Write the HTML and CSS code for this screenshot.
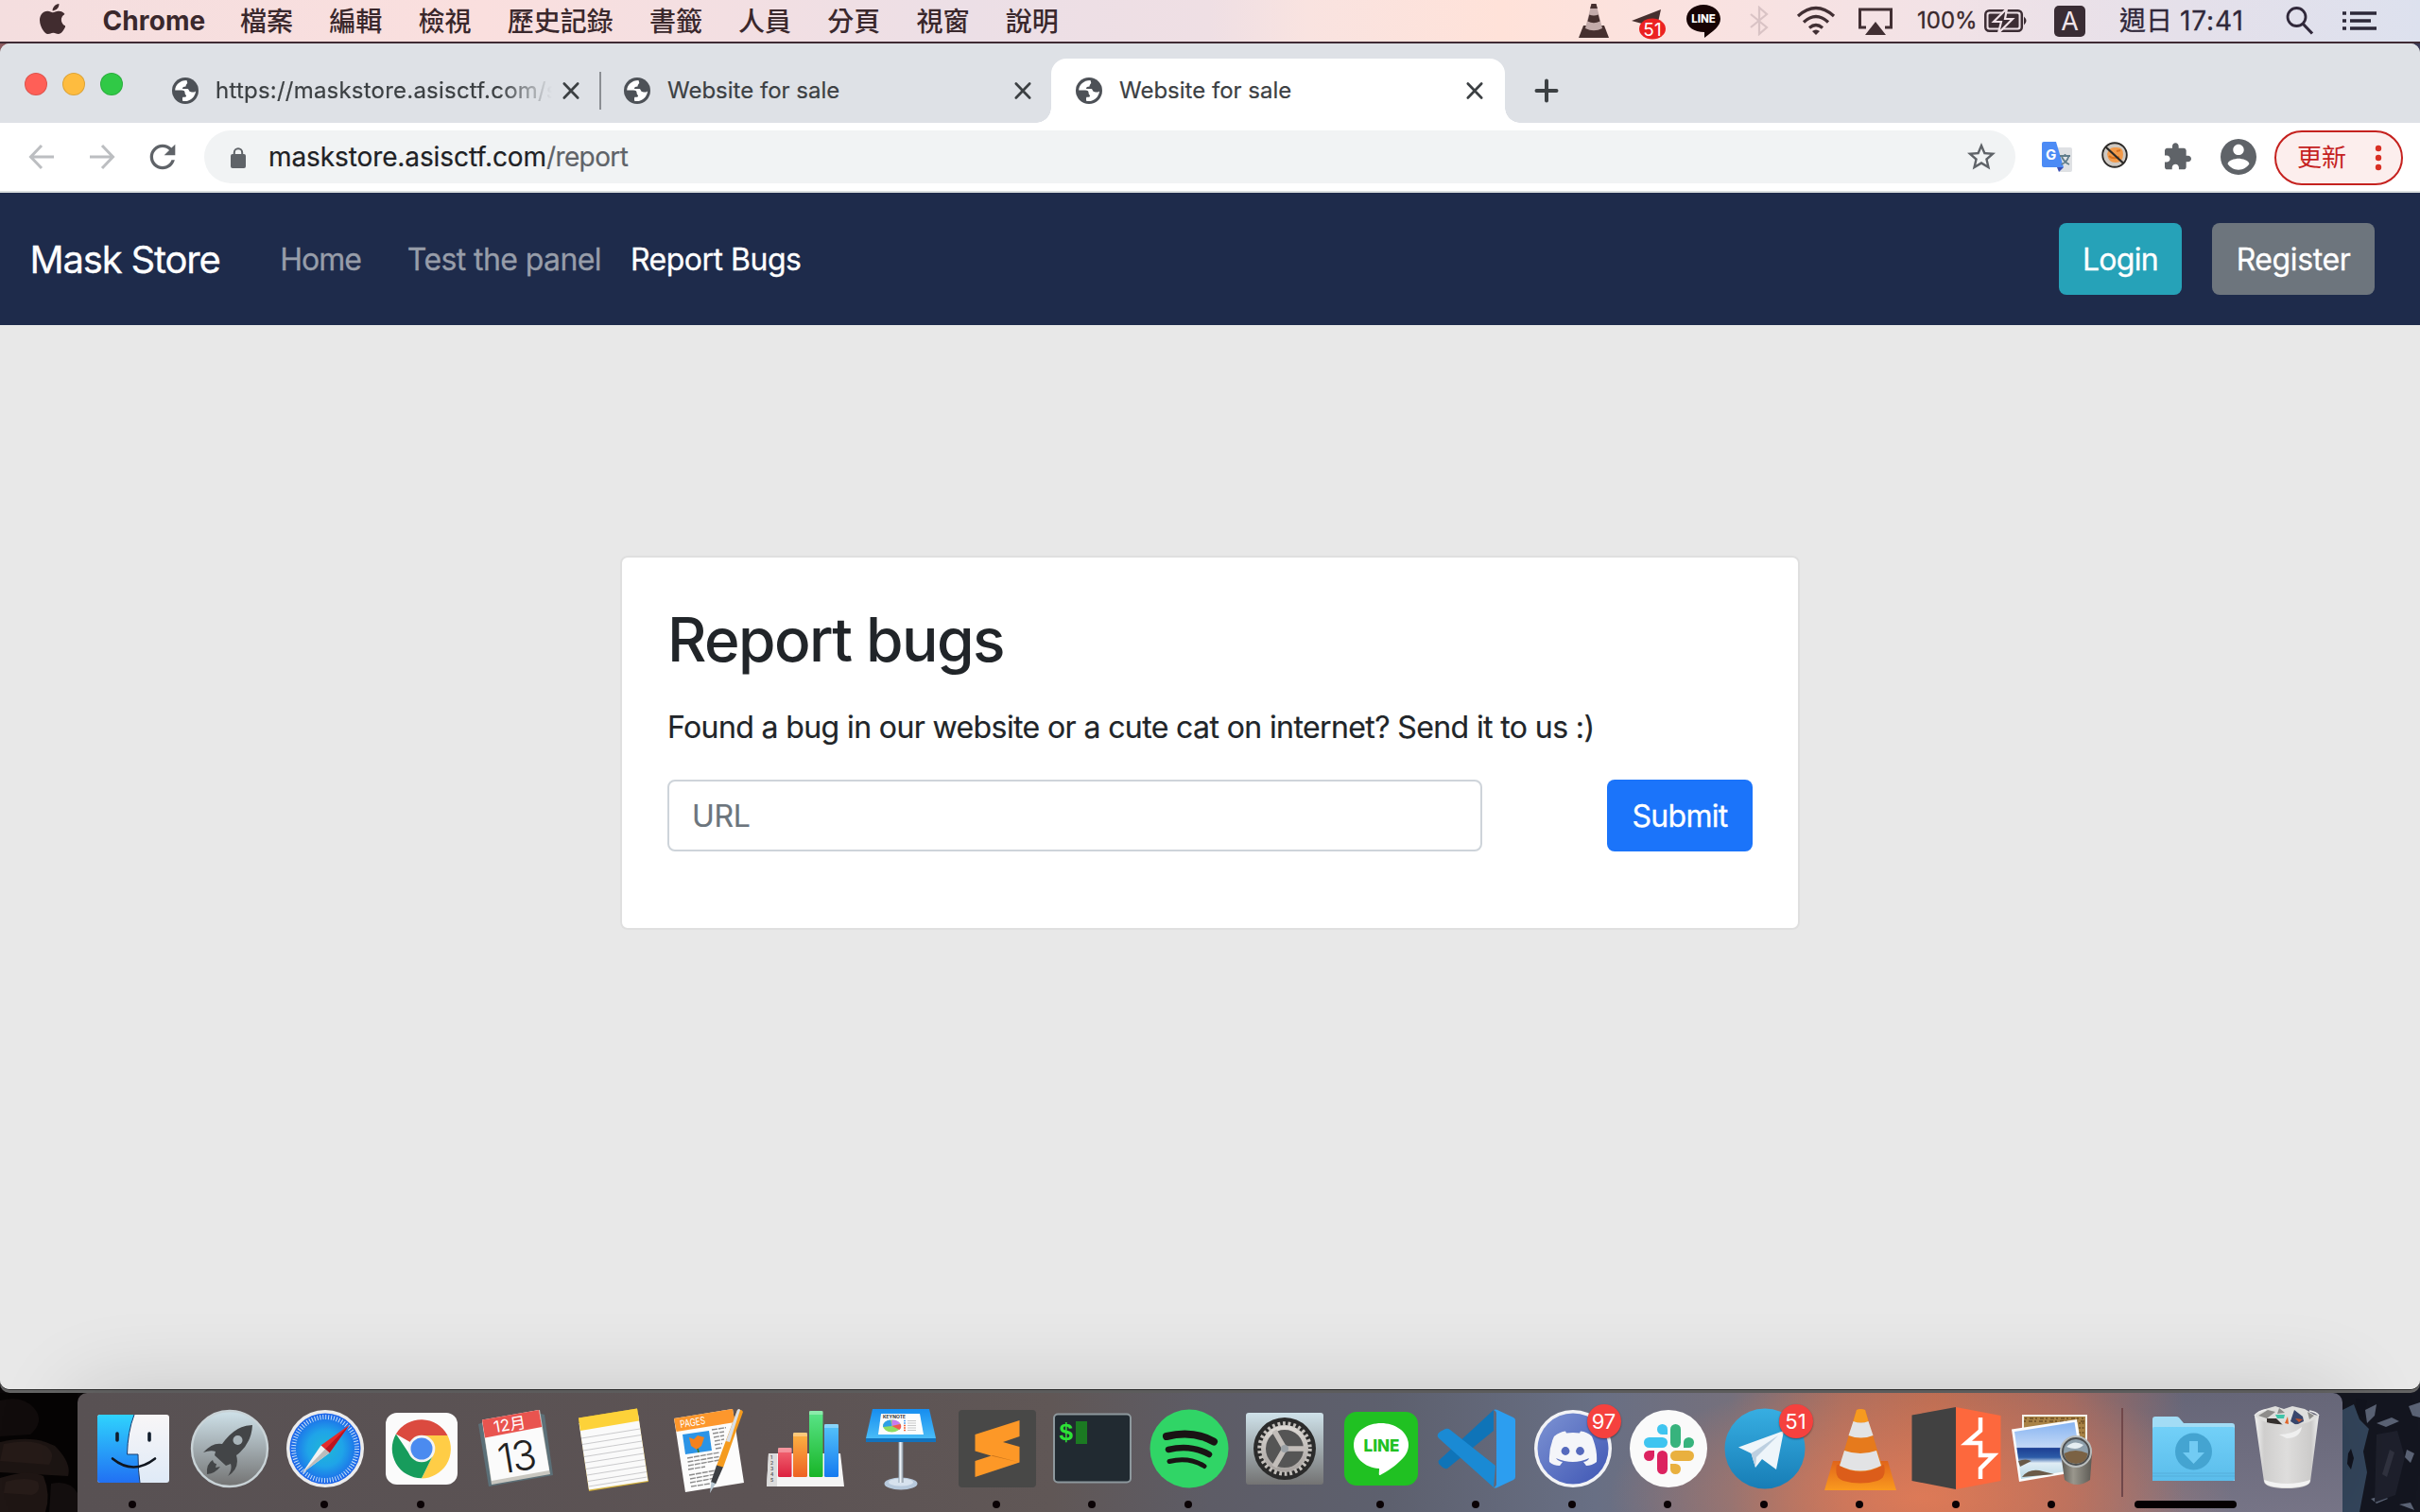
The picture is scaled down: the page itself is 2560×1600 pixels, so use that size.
FILE: index.html
```
<!DOCTYPE html>
<html lang="zh-Hant">
<head>
<meta charset="utf-8">
<title>Website for sale</title>
<link rel="stylesheet" href="styles.css">
</head>
<body>
<svg class="defs" width="0" height="0" aria-hidden="true">
  <symbol id="globe" viewBox="0 0 28 28"><circle cx="14" cy="14" r="14" fill="#4d5157"/><path d="M15.500 3C8 3 3.400 8 3.200 13.600H10c3 0 3.600 1 3.600 3 0 1.400 1.200 1.800 1.400 2.800 0 1.600-2 1.300-3.600 1.300-.6 1.500-.5 3-.2 4.100C18 26.400 24.600 21 25 14.400c-1.500 1.300-3.500 1.500-5 .9-2.600-.3-1.600-2.600-3.600-3.300H11c0-2.200 1.500-2.300 3.500-2.500C14.800 7.500 15.200 7 16.300 6z" fill="#fff"/></symbol>
  <symbol id="close" viewBox="0 0 20 20"><path d="M2.800 2.500l14.400 15M17.200 2.500l-14.400 15" stroke="#3c4043" stroke-width="2.700" stroke-linecap="round"/></symbol>
  <linearGradient id="finderL" x1="0" y1="0" x2="0" y2="1"><stop offset="0" stop-color="#2fd3fd"/><stop offset="1" stop-color="#2170f3"/></linearGradient>
  <linearGradient id="finderR" x1="0" y1="0" x2="0" y2="1"><stop offset="0" stop-color="#f8f6f7"/><stop offset="1" stop-color="#dfeaf7"/></linearGradient>
  <linearGradient id="steel" x1="0" y1="0" x2="0" y2="1"><stop offset="0" stop-color="#cfe2ea"/><stop offset="1" stop-color="#737373"/></linearGradient>
  <radialGradient id="safari"><stop offset="0" stop-color="#20b7d6"/><stop offset=".5" stop-color="#1fa4e8"/><stop offset="1" stop-color="#1c63ea"/></radialGradient>
  <linearGradient id="blueBar" x1="0" y1="0" x2="0" y2="1"><stop offset="0" stop-color="#57c5fa"/><stop offset="1" stop-color="#157af0"/></linearGradient>
  <linearGradient id="orangeBar" x1="0" y1="0" x2="0" y2="1"><stop offset="0" stop-color="#fdb544"/><stop offset="1" stop-color="#ee6223"/></linearGradient>
  <linearGradient id="greenBar" x1="0" y1="0" x2="0" y2="1"><stop offset="0" stop-color="#5be58a"/><stop offset="1" stop-color="#18b527"/></linearGradient>
  <linearGradient id="redBar" x1="0" y1="0" x2="0" y2="1"><stop offset="0" stop-color="#f36a75"/><stop offset="1" stop-color="#dc213f"/></linearGradient>
  <linearGradient id="keynote" x1="0" y1="0" x2="0" y2="1"><stop offset="0" stop-color="#168df0"/><stop offset="1" stop-color="#4fc2f8"/></linearGradient>
  <linearGradient id="metal" x1="0" y1="0" x2="1" y2="0"><stop offset="0" stop-color="#8fa2b3"/><stop offset=".4" stop-color="#eef4fa"/><stop offset="1" stop-color="#7f8c99"/></linearGradient>
  <linearGradient id="gear" x1="0" y1="0" x2="0" y2="1"><stop offset="0" stop-color="#dcd8d4"/><stop offset="1" stop-color="#a8a3a0"/></linearGradient>
  <linearGradient id="tele" x1="0" y1="0" x2="0" y2="1"><stop offset="0" stop-color="#37aee2"/><stop offset="1" stop-color="#177db6"/></linearGradient>
  <linearGradient id="disc" x1="0" y1="0" x2="1" y2="1"><stop offset="0" stop-color="#7d93d3"/><stop offset="1" stop-color="#3f56b4"/></linearGradient>
  <linearGradient id="cone" x1="0" y1="0" x2="0" y2="1"><stop offset="0" stop-color="#e0641a"/><stop offset="1" stop-color="#fa9a1e"/></linearGradient>
  <linearGradient id="folder" x1="0" y1="0" x2="0" y2="1"><stop offset="0" stop-color="#72d0f8"/><stop offset="1" stop-color="#5bbdeb"/></linearGradient>
  <linearGradient id="sea" x1="0" y1="0" x2="0" y2="1"><stop offset="0" stop-color="#86b4f2"/><stop offset=".44" stop-color="#c3d8f6"/><stop offset=".46" stop-color="#1d3f93"/><stop offset=".62" stop-color="#2d5ca8"/><stop offset=".72" stop-color="#e0edf5"/><stop offset="1" stop-color="#b9d8e4"/></linearGradient>
  <linearGradient id="barrel" x1="0" y1="0" x2="1" y2="0"><stop offset="0" stop-color="#55544f"/><stop offset=".4" stop-color="#9a978d"/><stop offset="1" stop-color="#5c5a54"/></linearGradient>
  <linearGradient id="bin" x1="0" y1="0" x2="1" y2="0"><stop offset="0" stop-color="#f2f2f2"/><stop offset=".15" stop-color="#cfcecd"/><stop offset=".5" stop-color="#dedddc"/><stop offset=".88" stop-color="#cccbca"/><stop offset="1" stop-color="#efefef"/></linearGradient>
</svg>

<header class="menubar">
  <svg class="apple" width="28" height="32" viewBox="1.500 0 20 24" preserveAspectRatio="none"><path fill="#412c2f" d="M12.152 6.896c-.948 0-2.415-1.078-3.960-1.040-2.040.027-3.910 1.183-4.961 3.014-2.117 3.675-.546 9.103 1.519 12.090 1.013 1.454 2.208 3.090 3.792 3.039 1.520-.065 2.090-.987 3.935-.987 1.831 0 2.350.987 3.960.948 1.637-.026 2.676-1.480 3.676-2.948 1.156-1.688 1.636-3.325 1.662-3.415-.039-.013-3.182-1.221-3.220-4.857-.026-3.040 2.480-4.494 2.597-4.559-1.429-2.090-3.623-2.324-4.390-2.376-2-.156-3.675 1.090-4.610 1.090zM15.530 3.830c.843-1.012 1.400-2.427 1.245-3.830-1.207.052-2.662.805-3.532 1.818-.780.896-1.454 2.338-1.273 3.714 1.338.104 2.715-.688 3.559-1.701"/></svg>
  <nav class="menus"><b>Chrome</b><span>檔案</span><span>編輯</span><span>檢視</span><span>歷史記錄</span><span>書籤</span><span>人員</span><span>分頁</span><span>視窗</span><span>說明</span></nav>
  <div class="status">
    <svg width="32" height="36" viewBox="0 0 32 36"><path d="M5 23h22l5 13H0z" fill="#46302f"/><path d="M13.500 0h5l6.500 26q-9 4.500-18 0z" fill="#c3abaa"/><path d="M13.500 0h5l1.400 5h-7.800zM11.300 11.500q4.700 2 9.400 0l1.800 7q-6.500 3.500-13 0z" fill="#46302f"/></svg>
    <svg width="40" height="44" viewBox="0 0 40 44"><path d="M2 22L33 10l-4 18-10-4-6 1z" fill="#46302f"/><ellipse cx="24" cy="30.500" rx="14" ry="11" fill="#ec2222"/><text x="24" y="37.500" class="mini-badge" text-anchor="middle">51</text></svg>
    <svg width="40" height="40" viewBox="0 0 40 40"><path d="M20 3c10 0 18 6.500 18 15 0 8-8 13-17 20v-6C10 32 2 26.500 2 18S10 3 20 3z" fill="#170304"/><text x="20" y="22" class="line-mini" text-anchor="middle">LINE</text></svg>
    <svg width="22" height="32" viewBox="0 0 22 32"><path d="M2 9l17 14-8 7V2l8 7L2 23" fill="none" stroke="#d9c3c5" stroke-width="2.200"/></svg>
    <svg width="42" height="32" viewBox="0 0 42 32"><g fill="none" stroke="#412f33" stroke-width="3.200"><path d="M2 11q19-17 38 0M8 17.500q13-12 26 0M14 23.500q7-6 14 0"/></g><path d="M17 27q4-3 8 0l-4 4z" fill="#412f33"/></svg>
    <svg width="40" height="32" viewBox="0 0 40 32"><path d="M10 23H3.500V4h33v19H30" fill="none" stroke="#412f33" stroke-width="3"/><path d="M20 17l11 14H9z" fill="#412f33"/></svg>
    <span class="pct">100%</span>
    <svg width="48" height="28" viewBox="0 0 48 28"><rect x="2.300" y="3.300" width="38.500" height="21.500" rx="4" fill="none" stroke="#3c2d34" stroke-width="2.500"/><rect x="5.500" y="6.500" width="32" height="15" rx="1.500" fill="#3c2d34"/><path d="M43 9.500q5 4.500 0 9z" fill="#3c2d34"/><path d="M25 1L11 15h8l-3 12 15-15h-8z" fill="#3c2d34" stroke="#f0e1e7" stroke-width="2.200"/></svg>
    <span class="ime">A</span>
    <span class="date">週日 <i>17:41</i></span>
    <svg width="32" height="32" viewBox="0 0 32 32"><circle cx="11.500" cy="12" r="9.500" fill="none" stroke="#30283a" stroke-width="2.800"/><path d="M18 19l10 10.500" stroke="#30283a" stroke-width="3.200"/></svg>
    <svg width="38" height="24" viewBox="0 0 38 24"><path d="M1 4h4M1 12h4M1 20h4M9 4h28M9 12h22M9 20h28" stroke="#2c2838" stroke-width="3.600"/></svg>
  </div>
</header>

<main class="window">
  <div class="tabstrip">
    <div class="lights"><i class="red"></i><i class="yellow"></i><i class="green"></i></div>
    <div class="tab"><svg width="28" height="28"><use href="#globe"/></svg><span class="tab-title fade">https://maskstore.asisctf.com/s</span><svg width="20" height="20"><use href="#close"/></svg><i class="sep"></i></div>
    <div class="tab"><svg width="28" height="28"><use href="#globe"/></svg><span class="tab-title">Website for sale</span><svg width="20" height="20"><use href="#close"/></svg></div>
    <div class="tab active"><svg width="28" height="28"><use href="#globe"/></svg><span class="tab-title">Website for sale</span><svg width="20" height="20"><use href="#close"/></svg></div>
    <svg class="plus" width="26" height="26" viewBox="0 0 26 26"><path d="M13 2.500v21M2.500 13h21" stroke="#3c4043" stroke-width="4" stroke-linecap="round"/></svg>
  </div>

  <div class="toolbar">
    <div class="nav-icons">
      <svg width="32" height="32" viewBox="0 0 32 32"><path d="M29 16H5M16 4L4.500 16 16 28" fill="none" stroke="#bcbec1" stroke-width="3"/></svg>
      <svg width="32" height="32" viewBox="0 0 32 32"><path d="M3 16h24M16 4l11.500 12L16 28" fill="none" stroke="#bcbec1" stroke-width="3"/></svg>
      <svg width="40" height="40" viewBox="0 0 24 24"><path fill="#5f6368" d="M17.650 6.350C16.200 4.900 14.210 4 12 4c-4.420 0-7.990 3.580-7.990 8s3.570 8 7.990 8c3.730 0 6.840-2.550 7.730-6h-2.080c-.82 2.330-3.040 4-5.650 4-3.310 0-6-2.690-6-6s2.690-6 6-6c1.660 0 3.140.69 4.220 1.780L13 11h7V4l-2.350 2.350z"/></svg>
    </div>
    <div class="omnibox">
      <svg class="lock" width="16" height="22" viewBox="0 0 16 22"><rect y="7" width="16" height="15" rx="2" fill="#5f6368"/><path d="M3.800 8V5.500a4.200 4.200 0 0 1 8.400 0V8" fill="none" stroke="#5f6368" stroke-width="2"/></svg>
      <span class="url">maskstore.asisctf.com<em>/report</em></span>
      <svg class="star" width="36" height="36" viewBox="0 0 24 24"><path fill="#5f6368" d="M22 9.240l-7.190-.62L12 2 9.190 8.630 2 9.240l5.460 4.730L5.820 21 12 17.270 18.180 21l-1.630-7.030L22 9.240zM12 15.400l-3.760 2.270 1-4.280-3.320-2.880 4.380-.38L12 6.100l1.710 4.040 4.380.38-3.320 2.880 1 4.280L12 15.400z"/></svg>
    </div>
    <svg class="ext-translate" width="32" height="32" viewBox="0 0 32 32"><path d="M12 6h18q2 0 2 2v22q0 2-2 2H19z" fill="#dfe1e4"/><path d="M16 27h7l-5 5z" fill="#3a4fb5"/><path d="M2 0h13l8 27H2q-2 0-2-2V2q0-2 2-2z" fill="#4c8bf5"/><text x="4" y="19" class="g-letter">G</text><path d="M19 15h11M24.500 13v2M28.500 15q-2 7-8 9M21 16q3 6 8 8" fill="none" stroke="#607d8b" stroke-width="1.800"/></svg>
    <svg class="ext-cookie" width="28" height="28" viewBox="0 0 28 28"><circle cx="14" cy="14" r="12.800" fill="#cfc9c2" stroke="#2c2a28" stroke-width="1.900"/><path d="M6 13q2-8 9-7 8-1 8 7 0 9-8 9-8 0-9-9z" fill="#f29a4a"/><path d="M8 15q4 4 11 1M16 10l4-1" stroke="#d9731f" stroke-width="2" fill="none"/><path d="M4.500 5.500l19 17.500" stroke="#2c2a28" stroke-width="2.300"/></svg>
    <svg class="ext-puzzle" width="32" height="32" viewBox="0.500 0 24 24"><path fill="#5f6368" d="M20.500 11H19V7c0-1.100-.9-2-2-2h-4V3.500C13 2.120 11.880 1 10.500 1S8 2.120 8 3.500V5H4c-1.100 0-1.990.9-1.990 2v3.800H3.500c1.490 0 2.700 1.210 2.700 2.700s-1.210 2.700-2.700 2.700H2V20c0 1.100.9 2 2 2h3.800v-1.500c0-1.490 1.210-2.700 2.700-2.700 1.490 0 2.700 1.210 2.700 2.700V22H17c1.100 0 2-.9 2-2v-4h1.500c1.380 0 2.500-1.120 2.500-2.500S21.880 11 20.500 11z"/></svg>
    <svg class="ext-user" width="38" height="38" viewBox="2 2 20 20"><path fill="#5f6368" d="M12 2C6.480 2 2 6.480 2 12s4.480 10 10 10 10-4.480 10-10S17.520 2 12 2zm0 3c1.660 0 3 1.340 3 3s-1.340 3-3 3-3-1.340-3-3 1.340-3 3-3zm0 14.200c-2.500 0-4.710-1.280-6-3.220.03-1.990 4-3.080 6-3.080 1.990 0 5.970 1.090 6 3.080-1.290 1.940-3.500 3.220-6 3.220z"/></svg>
    <div class="update"><span>更新</span><svg width="8" height="28" viewBox="0 0 8 28"><g fill="#d93025"><circle cx="4" cy="4" r="3.200"/><circle cx="4" cy="14" r="3.200"/><circle cx="4" cy="24" r="3.200"/></g></svg></div>
  </div>

  <nav class="navbar">
    <a class="brand">Mask Store</a>
    <a class="link home">Home</a>
    <a class="link test">Test the panel</a>
    <a class="link report">Report Bugs</a>
    <div class="auth"><button class="btn login">Login</button><button class="btn register">Register</button></div>
  </nav>

  <section class="page">
    <form class="card">
      <h2>Report bugs</h2>
      <p>Found a bug in our website or a cute cat on internet? Send it to us :)</p>
      <div class="form-row"><div class="field">URL</div><button class="btn submit" type="button">Submit</button></div>
    </form>
  </section>
</main>

<footer class="desktop">
  <svg class="rocks" width="82" height="126" viewBox="0 0 82 126"><rect width="82" height="126" fill="#060404"/><path d="M0 8q24-6 36 8t-4 28L0 46z" fill="#110c0c"/><path d="M0 52q36-8 58 4 18 18 14 32-36-2-72-4z" fill="#1d1513"/><path d="M4 54q28-6 44 2 12 8 4 20L0 72z" fill="#261b18"/><path d="M0 90q30-10 46-2 8 20 2 38H0z" fill="#1f1614"/><path d="M6 94q22-6 34 0 4 10-6 14L4 106z" fill="#271c19"/><path d="M54 96q20-4 28 10v20H52z" fill="#140f0f"/></svg>
  <div class="dock">
    <div class="cell on"><svg viewBox="0 0 100 100"><rect x="12" y="13" width="76" height="72" rx="3" fill="url(#finderR)"/><path d="M15 13h36q-7 18-7.500 42h11.500q0 18 2 30H15q-3 0-3-3V16q0-3 3-3z" fill="url(#finderL)"/><path d="M51 13q-7 18-7.500 42h11.500q0 18 2 30" fill="none" stroke="#1a3c6e" stroke-width="1"/><path d="M33 33v7M67 33v7" stroke="#111d2c" stroke-width="3.600" stroke-linecap="round"/><path d="M28 59.500q22 18 45 0" fill="none" stroke="#10161f" stroke-width="2.600" stroke-linecap="round"/></svg></div>
    <div class="cell"><svg viewBox="0 0 100 100"><circle cx="50" cy="49" r="40" fill="url(#steel)" stroke="#c9d3d7" stroke-width="2.400"/><path d="M74 24q-16 0-29 16l-3 4q-10-2-20 9 8-3 13-1l-1 4 12 11 5-2q2 6-3 13 13-8 9-22 16-12 17-32z" fill="#434547"/><path d="M32 61q-7 4-6 15 9-1 14-8l-5 1 1-4q-3 0-4-4z" fill="#434547"/><circle cx="58.500" cy="40" r="5" fill="#a9b4b9"/></svg></div>
    <div class="cell on"><svg viewBox="0 0 100 100"><circle cx="50" cy="49" r="41" fill="#ececec"/><circle cx="50" cy="49" r="37.500" fill="url(#safari)"/><circle cx="50" cy="49" r="33.500" fill="none" stroke="#e6f2fc" stroke-width="5" stroke-dasharray="1 1.923" opacity=".85"/><path d="M75.500 24L45.500 45.500l9 8z" fill="#e32b2b"/><path d="M75.500 24L54.500 53.500l-4.500-4z" fill="#bb1420"/><path d="M25.500 75L45.500 45.500l9 8z" fill="#f2f2f2"/><path d="M25.500 75L54.500 53.500l-4.500-4z" fill="#bcbcbc"/></svg></div>
    <div class="cell on"><svg viewBox="0 0 100 100"><rect x="12" y="11" width="76" height="76" rx="12" fill="#fbfbfb"/><path d="M50 49L22.900 33.400A31.300 31.300 0 0 1 77.500 35H50z" fill="#db4a3f"/><path d="M50 35h27.500A31.300 31.300 0 0 1 50 80.500L62 56z" fill="#ffcd46"/><path d="M22.900 33.400A31.300 31.300 0 0 0 50 80.300L61.500 57 38 56z" fill="#179c5c"/><circle cx="50" cy="49" r="14.300" fill="#f4f4f4"/><circle cx="50" cy="49" r="11.500" fill="#4b8bf0"/></svg></div>
    <div class="cell"><svg viewBox="0 0 100 100"><path d="M9 23l5-2 61-9 4 1 9 64-68 12z" fill="#5c7078"/><path d="M13 20l61-12 11 68-62 11z" fill="#c9c7c0"/><path d="M13 18.500L73 8l11 64-61 11z" fill="#fbfbfb"/><path d="M13 18.500L73 8l3.200 18L16 37.500z" fill="#e9544f"/><g transform="rotate(-9.500 47 46)"><text x="46" y="29" class="cal-month" text-anchor="middle">12月</text><text x="47" y="73" class="cal-day" text-anchor="middle">13</text></g></svg></div>
    <div class="cell"><svg viewBox="0 0 100 100"><path d="M13 16.500L75 6.500l12 77.500-63 10z" fill="#d3b13c"/><path d="M13.500 22L76 12l10.500 71L24 92.500z" fill="#fafafa"/><path d="M13 16.500L75 6.500l2 13L15 30z" fill="#fdd239"/><g stroke="#c4c4c6" stroke-width=".9"><path d="M16 38l62-10M17 44.500l62-10M18 51l62-10M19 57.500l62-10M20 64l62-10M21 70.500l62-10M22 77l62-10M23 83.500l62-10M23.500 89l62-10"/></g></svg></div>
    <div class="cell"><svg viewBox="0 0 100 100"><path d="M13 17L75 7l12 78-62 10z" fill="#fcfcfc"/><path d="M13 17L75 7l2.500 14-62 10z" fill="#fd972c"/><text x="20" y="27" class="pages-label" transform="rotate(-9 20 27)" textLength="27" lengthAdjust="spacingAndGlyphs">PAGES</text><path d="M22 34l28-4 3 21-28 4z" fill="#2c94e6"/><path d="M29 37l5 2 4-4 7 2-3 9-5 4-6-4z" fill="#f4811c"/><path d="M38 49l1 4" stroke="#3a7a2b" stroke-width="1.500"/><g stroke="#8d8d8d" stroke-width="1.400" stroke-dasharray="6 1"><path d="M53 29l15-2.300M54 33l12-2M55 37l11-2M56 41l10-2M56 45l8-1.500M57 49l6-1M27 59l34-6M27.500 63l33-5.500M28 67l33-6M28 71l18-3M29 77l28-5M30 81l27-5M30 85l27-5M31 89l20-3"/></g><path d="M80 8q5-1 6 2L65 69l-7-2z" fill="#f59b1d"/><path d="M80 8q2-2 3 0L72 42l-4-1z" fill="#d8dfe8"/><path d="M58 66.500l7 2-8 18-5-2z" fill="#3c3f43"/><path d="M52.500 84l4.500 2-6 10z" fill="#b9c9d3"/></svg></div>
    <div class="cell"><svg viewBox="0 0 100 100"><path d="M11 54h76l4 35H9z" fill="#f4f4f4"/><path d="M11 54h9v35H9z" fill="#dcdcdc"/><g class="num-axis"><text x="13" y="60">1</text><text x="13" y="66">2</text><text x="13" y="72">3</text><text x="13" y="78">4</text><text x="13" y="84">5</text></g><rect x="21" y="48" width="14.500" height="31" rx="1.500" fill="url(#redBar)"/><rect x="37" y="32" width="15" height="47" rx="1.500" fill="url(#orangeBar)"/><rect x="54" y="9" width="14.500" height="70" rx="1.500" fill="url(#greenBar)"/><rect x="70" y="23" width="15" height="56" rx="1.500" fill="url(#blueBar)"/><g fill="#fff" opacity=".3"><path d="M21 48h14.500v5H21zM37 32h15v4H37zM54 9h14.500v4H54zM70 23h15v4H70z"/></g></svg></div>
    <div class="cell"><svg viewBox="0 0 100 100"><ellipse cx="50" cy="86" rx="17.500" ry="6.500" fill="#b7c9dc"/><ellipse cx="50" cy="84.500" rx="13" ry="4" fill="#d7e2ee"/><rect x="47.500" y="42" width="5" height="43" fill="url(#metal)"/><path d="M20 7h60l7 31v4H13v-4z" fill="url(#keynote)"/><path d="M13 38h74v4H13z" fill="#1272bd"/><path d="M29 12h41l4 22H26z" fill="#fcfcfc"/><text x="31" y="16.500" class="key-label" textLength="24" lengthAdjust="spacingAndGlyphs">KEYNOTE</text><ellipse cx="40.500" cy="25" rx="9.500" ry="6.500" fill="#8fdc62"/><path d="M40.500 25L31 26q0-7 8-7.500z" fill="#2e9fe8"/><path d="M40.500 25V18.500q7 0 9 4.500z" fill="#c77bf0"/><path d="M40.500 25l9-2q2 3-1 6z" fill="#f2574e"/><path d="M53 19.500h2M53 22h2" stroke="#5aa5ec" stroke-width="1.500"/><path d="M53 24.500h2M53 27h2M53 29.500h2" stroke="#ef6a3c" stroke-width="1.500"/><path d="M57 19.500h9M57 22h9M57 24.500h9M57 27h9M57 29.500h9" stroke="#c8c8c8" stroke-width="1"/></svg></div>
    <div class="cell on"><svg viewBox="0 0 100 100"><rect x="9" y="8" width="82" height="82" rx="4" fill="#484847"/><path d="M26.500 34L73.500 19v17L56 42l17.500 5v16.500L26.500 79V62l17-5.500-17-5z" fill="#fd9827"/><path d="M43.500 56.500L73.500 63.500 45 56z" fill="#c4701a"/></svg></div>
    <div class="cell on"><svg viewBox="0 0 100 100"><rect x="9" y="12.500" width="81" height="72" rx="4" fill="#212a31" stroke="#8d989d" stroke-width="2"/><text x="14" y="40" class="prompt">$</text><rect x="32" y="20" width="12" height="24" fill="#1b7a22"/></svg></div>
    <div class="cell on"><svg viewBox="0 0 100 100"><circle cx="50" cy="49" r="41.500" fill="#30d566"/><g fill="none" stroke="#191414" stroke-linecap="round"><path d="M26 36q28-7 50 5.500" stroke-width="8"/><path d="M28 50q23-6 43 5" stroke-width="6.500"/><path d="M29 62.500q21-5 37 5" stroke-width="5"/></g></svg></div>
    <div class="cell"><svg viewBox="0 0 100 100"><rect x="9" y="11" width="82" height="76" rx="3" fill="url(#steel)"/><circle cx="50" cy="49" r="33" fill="#2b2b2b"/><circle cx="50" cy="49" r="21" fill="#555"/><circle cx="50" cy="49" r="22.500" fill="none" stroke="url(#gear)" stroke-width="5"/><circle cx="50" cy="49" r="26.500" fill="none" stroke="#c4c0bc" stroke-width="4.500" stroke-dasharray="2.775 2.775"/><path d="M50 49h22M50 49L39 30M50 49L39 68" stroke="#c2bdb9" stroke-width="5.500"/><circle cx="50" cy="49" r="4" fill="#9aa0a5"/></svg></div>
    <div class="cell on"><svg viewBox="0 0 100 100"><rect x="11" y="10" width="78" height="78" rx="13" fill="#20c122"/><path d="M50 22c16 0 29 10 29 23 0 7-4 13-10 18-6 6-16 12-20 14-2 .5-1-2-1-7-16-1-27-12-27-25 0-13 13-23 29-23z" fill="#fff"/><text x="50.500" y="52" class="line-word" text-anchor="middle" textLength="38" lengthAdjust="spacingAndGlyphs">LINE</text></svg></div>
    <div class="cell on"><svg viewBox="0 0 100 100"><path d="M9.500 62L68 8v22L19 70q-3 1-9-5z" fill="#0f74b8"/><path d="M9 34q0-2 8-6 3-1 5 1l48 38-2 23L10 38q-2-2-1-4z" fill="#1a8ad4"/><path d="M68 8q2-1 4 0l17 8q2 1 2 3v60q0 2-2 3l-17 8q-2 1-4 0 3-1 3-4V12q0-3-3-4z" fill="#2c9ef0"/></svg></div>
    <div class="cell on"><svg viewBox="0 0 100 100"><circle cx="50" cy="49" r="41" fill="#f2f3f6"/><circle cx="50" cy="49" r="37.500" fill="url(#disc)"/><path d="M30 36q6-5 12-5.500l1 2q7-1 14 0l1-2q7 .5 12 5.500 6 14 5 27-5 4-11 4l-3-4q5-1 6-4-17 8-35 0 2 3 7 4l-3 4q-7 0-11-4-1-14 5-27z" fill="#f4f5f9"/><circle cx="42" cy="51.500" r="4.400" fill="#5569bd"/><circle cx="57.500" cy="51.500" r="4.400" fill="#5569bd"/></svg><b class="badge">97</b></div>
    <div class="cell on"><svg viewBox="0 0 100 100"><circle cx="50" cy="49" r="41" fill="#fafafa"/><g fill="#3fc5f0"><rect x="24" y="37" width="25" height="11" rx="5.500"/><path d="M43.500 23a5.500 5.500 0 0 1 5.500 5.500V34h-5.500a5.500 5.500 0 0 1 0-11z"/></g><g fill="#37b37d"><rect x="52" y="23" width="11" height="25" rx="5.500"/><path d="M77 42.500a5.500 5.500 0 0 1-5.500 5.500H66v-5.500a5.500 5.500 0 0 1 11 0z"/></g><g fill="#e9b03e"><rect x="52" y="51" width="25" height="11" rx="5.500"/><path d="M57.500 76a5.500 5.500 0 0 1-5.500-5.500V65h5.500a5.500 5.500 0 0 1 0 11z"/></g><g fill="#dc2360"><rect x="38" y="51" width="11" height="25" rx="5.500"/><path d="M24 56.500a5.500 5.500 0 0 1 5.500-5.500H35v5.500a5.500 5.500 0 0 1-11 0z"/></g></svg></div>
    <div class="cell on"><svg viewBox="0 0 100 100"><circle cx="50" cy="49" r="42.500" fill="url(#tele)"/><path d="M22 47.500L70 30 62 71l-15-11-7 9-4.500-15z" fill="#eef5fa"/><path d="M35.500 54L64 35 41 58l-1 11z" fill="#bccfe0"/></svg><b class="badge">51</b></div>
    <div class="cell on"><svg viewBox="0 0 100 100"><path d="M21 62h58l9 31H12z" fill="url(#cone)"/><path d="M25 66h50q3 14-7 17-18 5-36 0-10-3-7-17z" fill="#dc5d1a"/><path d="M46 8q4-2 9 0l18 59q-23 13-45 0z" fill="#e67a1c"/><path d="M46 8q4-2 9 0l3.500 12q-8 3-16 0z" fill="#f69a20"/><path d="M42.500 20q8 3 16 0l5 15q-13 5-26 0zM33 51q17 6 34 0l5 16q-22 11-44 0z" fill="#e2e3e5"/></svg></div>
    <div class="cell on"><svg viewBox="0 0 100 100"><path d="M2.500 13.500L49 5v87L2.500 83z" fill="#414141"/><path d="M49 5l47.500 9v69L49 92z" fill="#fd683d"/><path d="M75 16v14L60 43h15v13h14L75 70v11" fill="none" stroke="#fff" stroke-width="4.500"/></svg></div>
    <div class="cell on"><svg viewBox="0 0 100 100"><rect x="18" y="13" width="69" height="50" fill="#f4f1ea"/><rect x="20" y="15" width="65" height="46" fill="#a88245"/><path d="M21 17h62M20 20h64" stroke="#6d4f25" stroke-width="1.600" stroke-dasharray="2 3 4 2"/><path d="M78 22h6M78 27h6M78 32h6M78 37h6" stroke="#6d4f25" stroke-width="1.600" stroke-dasharray="2 1.500"/><path d="M7 28.500L76 18l9 54-70 12z" fill="#fbfbfb"/><path d="M10 31l63.500-10 8 49L17 81z" fill="url(#sea)"/><path d="M14 62q8-3 14 0l-12 6zM18 79q8-10 22-6l12 3z" fill="#6a5a48"/><path d="M59 54h33l-2 28q-14 10-27 0z" fill="url(#barrel)"/><circle cx="75" cy="52" r="16" fill="#4d4f50" stroke="#b9bdbd" stroke-width="2"/><circle cx="75" cy="52" r="13" fill="#8fa0ac"/><path d="M62.500 54q12-6 25 0-1 10.500-12.500 11-11-.5-12.500-11z" fill="#7b6244"/><path d="M65 47q8-8 18-2-6 7-18 2z" fill="#e6eef2"/></svg></div>
    <i class="divider"></i>
    <div class="cell downloads"><svg viewBox="0 0 100 100"><path d="M6 83V18q0-3 3-3h22q2 0 3 1l5 6h51q3 0 3 3v58z" fill="#a2dcf5"/><path d="M6 83V28q0-2 2-2h83q2 0 2 2v53q0 2-2 2z" fill="url(#folder)"/><circle cx="49.500" cy="52" r="19.500" fill="#44a4d1"/><path d="M45 41h9v12h7L49.500 65 38 53h7z" fill="#72cbf3"/><path d="M6 75h87M6 78h87" stroke="#55aedb" stroke-width="1"/></svg></div>
    <div class="cell bin"><svg viewBox="0 0 100 100"><path d="M16 14l8-6 14-4 9 3 9-3 13 3 10 6 5 1-4 10H20z" fill="#dededc"/><path d="M20 14l10-6 8 2-9 7zM42 6l6 5-8 1zM72 10l7 4-5 4z" fill="#8d8c8a"/><path d="M29 17l10 0 7 7-9 1-8-3z" fill="#34302e"/><path d="M38 13l10 0-1 4-7 0z" fill="#3ec4a8"/><path d="M54 20l4-12 9 7 1 5-8 4z" fill="#39466c"/><path d="M48 22l3-7 1 8z" fill="#e06428"/><path d="M59 17l8 1-4 3z" fill="#c4522a"/><path d="M16 14q8 9 34 9.500T84 14l-9 70q-3 7-25 7t-24-7z" fill="url(#bin)"/><path d="M16 14q4-5 12-6M84 14q-3-4-10-5" stroke="#ececec" stroke-width="1.500" fill="none"/><path d="M26 82q24 8 49 0l-1 3q-4 5-24 5t-23-5z" fill="#f3f3f3"/><path d="M42 34q14 0 24-8-2 12-16 12z" fill="#efefef"/></svg></div>
  </div>
  <svg class="rocks" width="82" height="126" viewBox="0 0 82 126"><rect width="82" height="126" fill="#141620"/><path d="M0 18l12-6 6 16 10 10-6 24 4 22-8 42H0z" fill="#34465c"/><path d="M6 64l3-5 3 10-3 12-4-6zM14 6l12 2-4 18-6-4z" fill="#12141e"/><path d="M24 18l12-6-2 12-8 8zM36 32l16-6 8 4-14 6zM70 14l12-4v16l-8-2zM68 60l8 4-4 10-6-6zM30 112l14-4 4 4-12 5zM60 118l12-2 4 8z" fill="#5b6375"/><path d="M36 44l22-4 8 28-10 40-22 8z" fill="#1e202c"/><path d="M50 60l5 3-8 26-5-3z" fill="#30323f"/></svg>
</footer>
</body>
</html>
```
FILE: styles.css
```
* { box-sizing: border-box; }
body {
  margin: 0; width: 2560px; height: 1600px; overflow: hidden;
  display: grid; grid-template-rows: 46px 1424px 130px;
  background: linear-gradient(90deg, #8c5a5e, #3d2a3a 50%, #3c3c58) 0 0 / 100% 80px no-repeat, linear-gradient(90deg, #0a0708 50%, #141620 50%);
  font-family: Inter, "Noto Sans CJK TC", sans-serif; color: #212529;
}
svg { display: block; flex: none; }
i, em { font-style: normal; }
.defs { position: absolute; }

/* menu bar */
.menubar {
  display: flex; align-items: center; height: 46px; border-bottom: 2px solid #3f2a34; padding-left: 41px;
  background: linear-gradient(90deg, #f4dedf, #fadfde 20%, #ecdfe6 40%, #efdfe4 50%, #f9e3e0 54%, #ffe2d9 62%, #fae2e0 70%, #f2e2e6 80%, #e5e0ea 90%, #dde1ee);
  font-size: 28px; line-height: 44px; color: #3a282c;
}
.apple { margin-top: -5px; }
.menus { display: flex; gap: 38.200px; margin-left: 39.500px; white-space: nowrap; }
.menus b { letter-spacing: .1px; margin-right: -1.500px; }
.menus span { font-weight: 500; padding-top: 1px; }
.status {
  margin-left: auto; display: grid; align-items: center; height: 44px;
  grid-template-columns: 54px 58px 68px 50px 64px 64px 70px 75px 69px 176px 59px 83px;
}
.mini-badge { font-size: 19px; fill: #fff; }
.line-mini { font-size: 11.500px; font-weight: 800; fill: #fff; }
.pct { font-size: 24px; }
.ime { width: 33px; height: 33px; border-radius: 5px; background: #392c34; color: #f0e4ea; text-align: center; line-height: 33px; font-size: 27px; }
.date { white-space: nowrap; color: #30283a; }
.date i { letter-spacing: .9px; }
.pct, .date { -webkit-text-stroke: .3px; }

/* browser window */
.window {
  display: grid; grid-template-rows: 84px 74px 140px 1fr; border-radius: 10px;
  box-shadow: 0 1px 0 #303030, 0 4px 0 #646464; overflow: hidden; background: #e8e8e8;
}
.tabstrip { display: flex; align-items: flex-end; background: #dee1e6; }
.lights { display: flex; gap: 16px; width: 158px; padding-left: 26px; margin-bottom: 29px; }
.lights i { width: 24px; height: 24px; border-radius: 50%; border: 1px solid #0002; }
.red { background: #ff5f57; } .yellow { background: #febc3f; } .green { background: #30c946; }
.tab { position: relative; display: flex; align-items: center; width: 478px; height: 68px; padding-left: 24px; }
.tab-title { width: 358px; margin: 0 8px 0 18px; font-size: 24px; line-height: 34px; color: #3c4043; white-space: nowrap; overflow: hidden; -webkit-text-stroke: .2px; }
.fade { letter-spacing: .22px; width: 358px; -webkit-mask-image: linear-gradient(90deg, #000 300px, transparent 356px); mask-image: linear-gradient(90deg, #000 300px, transparent 356px); }
.sep { width: 2px; height: 40px; margin-left: auto; background: #8b8e93; }
.active { width: 480px; margin-left: -2px; padding-left: 26px; background: #fff; border-radius: 16px 16px 0 0; }
.active::before, .active::after { content: ""; position: absolute; bottom: 0; width: 16px; height: 16px; }
.active::before { left: -16px; background: radial-gradient(circle at 0 0, transparent 15.500px, #fff 16px); }
.active::after { right: -16px; background: radial-gradient(circle at 100% 0, transparent 15.500px, #fff 16px); }
.plus { margin: 0 0 21px 31px; }

.toolbar { display: flex; align-items: center; background: #fff; border-bottom: 2px solid #dadfdf; padding-left: 28px; }
.nav-icons { display: flex; align-items: center; gap: 32px; width: 188px; }
.nav-icons svg:last-child { margin-left: -4px; }
.omnibox { display: flex; align-items: center; width: 1916px; height: 56px; border-radius: 28px; background: #f1f3f4; padding: 0 18px 0 28px; }
.lock { margin-top: 2px; }
.url { margin-left: 24px; font-size: 28px; letter-spacing: -.1px; color: #202124; -webkit-text-stroke: .2px; }
.url em { color: #5f6368; letter-spacing: -.6px; }
.star { margin-left: auto; }
.ext-translate { margin-left: 28px; }
.g-letter { font-size: 15px; font-weight: 700; fill: #fff; }
.ext-cookie { margin: -4px 0 0 31px; }
.ext-puzzle { margin-left: 37px; }
.ext-user { margin-left: 29px; }
.update { display: flex; align-items: center; width: 136px; height: 58px; margin: 2px 0 0 19px; border: 2px solid #c5221f; border-radius: 29px; background: #fceeed; padding-left: 22px; color: #c5221f; font-size: 26px; line-height: 52px; }
.update svg { margin-left: 30px; }

/* site navigation */
.navbar { display: flex; align-items: center; background: #1e2b4b; color: #fff; font-size: 32px; padding: 0 48px 0 31.500px; white-space: nowrap; -webkit-text-stroke: .3px; }
.brand { font-size: 40px; letter-spacing: -1.180px; }
.link { color: #979da9; }
.home { margin-left: 63.500px; letter-spacing: -1px; }
.test { margin-left: 49px; letter-spacing: -.590px; }
.report { margin-left: 31px; letter-spacing: -.5px; color: #fff; }
.auth { display: flex; gap: 32px; margin-left: auto; }
.btn { font: 32px Inter, sans-serif; height: 76px; border: 0; border-radius: 8px; color: #fff; padding: 0; letter-spacing: -.4px; -webkit-text-stroke: .3px; }
.login { width: 130px; background: #26a2b8; letter-spacing: -.7px; }
.register { width: 172px; background: #6d757d; }

/* report form */
.page { background: #e8e8e8; padding: 244px 656px 0; }
.card { height: 396px; border: 2px solid #dfdfdf; border-radius: 8px; background: #fff; padding: 48px; }
.card h2 { margin: 1px 0 31px; font-size: 64px; font-weight: 500; line-height: 76px; letter-spacing: -1.580px; }
.card p { margin: 1px 0 31px; font-size: 32px; line-height: 48px; letter-spacing: -.610px; white-space: nowrap; -webkit-text-stroke: .2px; }
.form-row { display: flex; justify-content: space-between; }
.field { width: 862px; height: 76px; border: 2px solid #ced4da; border-radius: 8px; padding-left: 24px; font-size: 32px; line-height: 74px; color: #6c757d; letter-spacing: -.3px; -webkit-text-stroke: .2px; }
.submit { width: 154px; background: #1b74fa; letter-spacing: -.7px; }

/* dock */
.desktop { position: relative; display: flex; align-items: flex-end; height: 130px; }
.rocks { position: relative; z-index: -1; }
.dock {
  position: relative; display: flex; width: 2396px; height: 126px; padding: 10px 0 0 8px; border-radius: 10px 10px 0 0;
  background: radial-gradient(ellipse 330px 130px at 1950px 110px, #e67d58cc, #e67d5800), linear-gradient(90deg, #585153, #5c5354 30%, #605756 43%, #5d5c66 50%, #5d606e 58%, #686f84 67%, #75707c 73%, #a96e5f 78%, #b86c53 82%, #a06a62 88%, #78687000 93%), linear-gradient(#666678, #767486);
  box-shadow: 0 0 90px rgba(0, 0, 0, .16);
}
.cell { position: relative; flex: none; width: 101.500px; height: 116px; }
.cell svg { width: 100px; height: 100px; margin: 0 1.200px; overflow: visible; }
.on::after { content: ""; position: absolute; left: 46px; top: 104px; width: 8px; height: 8px; border-radius: 50%; background: #0a0205; }
.badge { position: absolute; left: 66px; top: 2px; width: 36px; height: 36px; border-radius: 50%; background: #f5413e; color: #fff; font-size: 22px; font-weight: 400; line-height: 36px; text-align: center; box-shadow: 0 1px 2px #0006; }
.divider { width: 2px; height: 94px; margin: 6px 0 0 22px; background: #70474a; }
.downloads { margin-left: 24px; }
.downloads::after { content: ""; position: absolute; left: -12px; top: 104px; width: 108px; height: 8px; border-radius: 4px; background: #050002; }
.bin { margin-left: -3px; }
.cal-month { font-size: 17px; fill: #fff; }
.cal-day { font-size: 43px; font-weight: 300; fill: #222; letter-spacing: -2px; }
.pages-label { font-size: 11px; fill: #fff; }
.num-axis { font-size: 5px; font-weight: 700; fill: #666; }
.key-label { font-size: 4.500px; font-weight: 700; fill: #333; }
.prompt { font: 700 26px "Liberation Mono", monospace; fill: #2de336; }
.line-word { font-size: 18px; font-weight: 800; fill: #20c122; }
```
